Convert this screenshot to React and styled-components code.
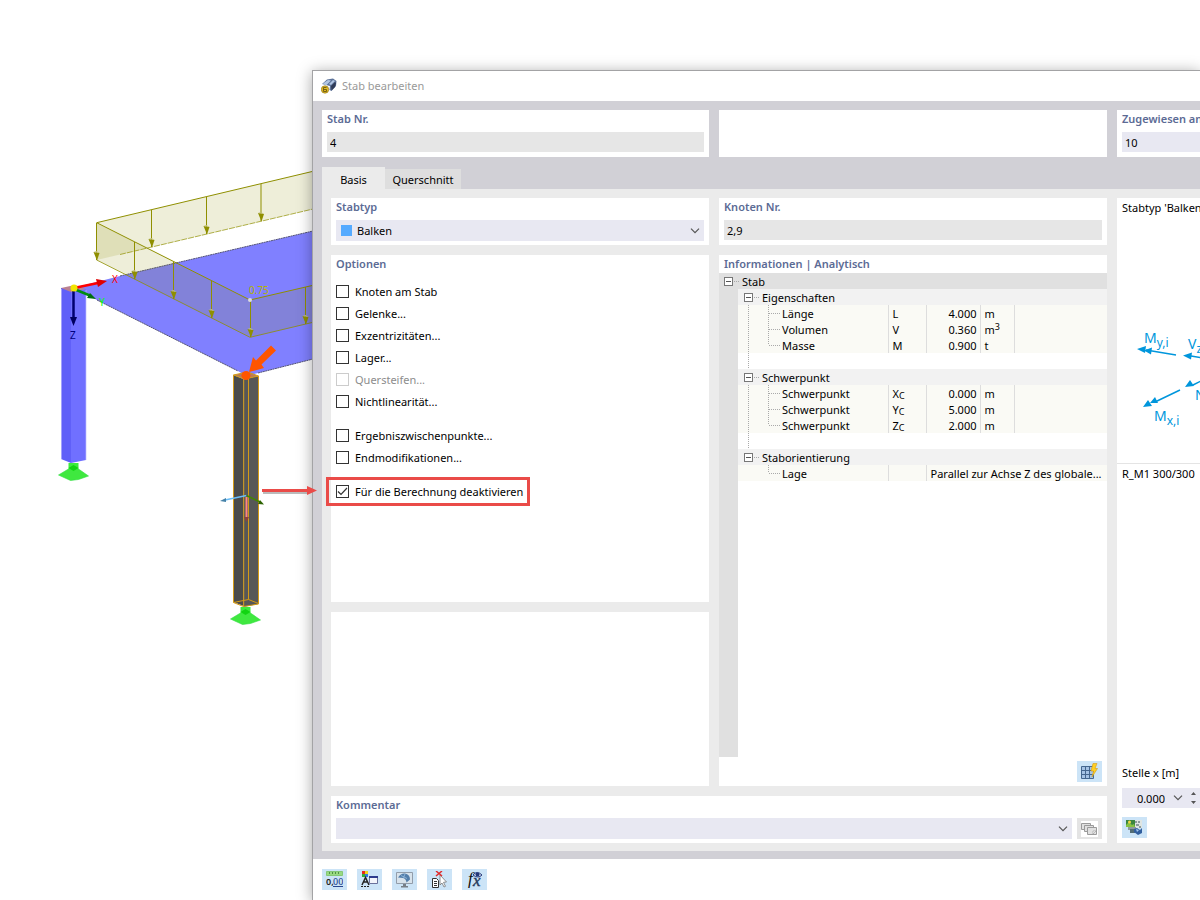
import styled, { createGlobalStyle } from "styled-components";

const GlobalStyle = createGlobalStyle`
  * {
    box-sizing: border-box;
  }

  body {
    margin: 0;
    background: #fff;
    color: #000;
    font-family: "Noto Sans", "Open Sans", sans-serif;
    font-size: 11px;
    line-height: 16px;
  }

  input,
  select,
  button {
    font: inherit;
    color: inherit;
  }
`;

const Page = styled.main`
  position: relative;
  display: grid;
  grid-template-columns: 312px minmax(0, 1fr);
  height: 100vh;
  min-height: 700px;
  overflow: hidden;
`;

const Scene = styled.svg`
  display: block;
  width: 312px;
  height: 900px;
`;

/* lies over both the model and the dialog */
const Callout = styled.svg`
  position: absolute;
  left: 258px;
  top: 480px;
  pointer-events: none;
`;

const Dialog = styled.section`
  display: flex;
  flex-direction: column;
  margin-top: 70px;
  border: solid #a3a3a5;
  border-width: 1px 0 0 1px;
  background: #fff;
  box-shadow: 0 2px 14px rgba(0, 0, 0, 0.35);
`;

const TitleBar = styled.header`
  display: flex;
  align-items: center;
  gap: 5px;
  height: 30px;
  padding-left: 8px;
`;

const Title = styled.h1`
  margin: 0;
  font-size: 11px;
  font-weight: 400;
  color: #999;
`;

const Body = styled.div`
  display: flex;
  flex-direction: column;
  flex: 1;
  min-height: 0;
  padding: 9px 0 8px 9px;
  background: #d1d0d6;
`;

const HeadRow = styled.div`
  display: grid;
  grid-template-columns: 387px minmax(0, 1fr) 83px;
  gap: 10px;
  height: 47px;
`;

const Tabs = styled.div`
  display: flex;
  align-items: flex-end;
  height: 22px;
  margin-top: 10px;
`;

const Tab = styled.button`
  width: ${(p) => (p.$active ? 63 : 76)}px;
  height: ${(p) => (p.$active ? 22 : 20)}px;
  padding: ${(p) => (p.$active ? "4px 0 0" : "2px 0 0")};
  border: 0;
  background: ${(p) => (p.$active ? "#ebebeb" : "#dedede")};
`;

const Content = styled.div`
  display: grid;
  grid-template-columns: 378px minmax(0, 1fr) 83px;
  grid-template-rows: 47px minmax(0, 1fr) 47px;
  gap: 10px;
  flex: 1;
  min-height: 0;
  padding: 9px 0 8px 9px;
  background: #ebebeb;
`;

const Card = styled.section`
  display: flex;
  flex-direction: column;
  min-width: 0;
  padding: 0 5px;
  flex: ${(p) => p.$grow || "none"};
  background: #fff;
`;

const EdgeCard = styled(Card)`
  padding-right: 0;
`;

const WideCard = styled(Card)`
  grid-column: 1 / 3;
`;

const TreeCard = styled(Card)`
  padding: 0;
`;

const SideCard = styled(Card)`
  grid-column: 3;
  grid-row: 1 / 4;
  padding: 0;
  overflow: hidden;
  white-space: nowrap;
`;

const Stack = styled.div`
  display: flex;
  flex-direction: column;
  gap: 10px;
  min-height: 0;
`;

const Label = styled.label`
  height: 22px;
  line-height: 18px;
  font-weight: 600;
  color: #5c6b95;
  white-space: nowrap;
`;

const Heading = styled.h2`
  height: ${(p) => (p.$tight ? 18 : 22)}px;
  margin: 0;
  padding-left: ${(p) => (p.$tight ? 5 : 0)}px;
  font-size: 11px;
  line-height: 18px;
  font-weight: 600;
  color: #5c6b95;
`;

const Field = styled.input`
  width: 100%;
  height: 20px;
  padding: 0 3px;
  border: 0;
  border-radius: 0;
  outline: 0;
  background: ${(p) => (p.readOnly ? "#e6e6e6" : "#e8e8f2")};
`;

const SelectBox = styled.div`
  display: flex;
  align-items: center;
  flex: 1;
  height: 21px;
  max-height: 21px;
  padding: 0 4px 0 5px;
  background: #e8e8f2;
`;

const Swatch = styled.span`
  width: 11px;
  height: 11px;
  margin-right: 5px;
  background: #55aaff;
`;

const Select = styled.select`
  flex: 1;
  min-width: 0;
  padding: 0;
  border: 0;
  outline: 0;
  appearance: none;
  background: transparent;
`;

const Line = styled.div`
  display: flex;
  gap: 5px;
`;

const OptionList = styled.div`
  display: flex;
  flex-direction: column;
  align-items: flex-start;
  gap: 1px;
  padding-top: 4px;
`;

const OptionRow = styled.label`
  position: relative;
  display: flex;
  align-items: center;
  gap: 6px;
  height: 21px;
  margin-top: ${(p) => (p.$apart ? 12 : 0)}px;
  color: ${(p) => (p.$off ? "#8c8c8c" : "#000")};

  &::after {
    content: "";
    display: ${(p) => (p.$marked ? "block" : "none")};
    position: absolute;
    inset: -4px -7px -4px -10px;
    border: 3px solid #ea4b48;
  }
`;

const Check = styled.input`
  appearance: none;
  width: 13px;
  height: 13px;
  margin: 0;
  border: 1px solid #333;
  background: #fff;

  &:disabled {
    border-color: #ccc;
  }

  &:checked {
    background: url("data:image/svg+xml,%3Csvg xmlns='http://www.w3.org/2000/svg' viewBox='0 0 11 11'%3E%3Cpath d='M1 5.5l3 3 6-6.500' fill='none' stroke='%23333' stroke-width='1.200'/%3E%3C/svg%3E");
  }
`;

const TreeArea = styled.div`
  flex: 1;
  min-height: 0;
  overflow: hidden;
  background: linear-gradient(to right, #e0e0e0 19px, #fff 19px);
`;

const Tree = styled.table`
  width: 100%;
  table-layout: fixed;
  border-collapse: collapse;

  td {
    height: 16px;
    padding: 0;
    line-height: 16px;
    white-space: nowrap;
    overflow: hidden;
    text-overflow: ellipsis;
  }

  sub,
  sup {
    font-size: 9px;
    line-height: 0;
  }

  sub {
    vertical-align: -1px;
  }

  sup {
    vertical-align: 4px;
  }
`;

const Gutter = styled.td`
  background: #e0e0e0;
`;

const RootCell = styled.td`
  background: #e0e0e0;
`;

const GroupCell = styled.td`
  background: #f2f2f2;
`;

const NameCell = styled.td`
  background: #fafaf5;
`;

const DataCell = styled.td`
  && {
    padding: 2px ${(p) => (p.$right ? 3 : 4)}px 0;
    line-height: 14px;
  }
  border-left: 1px solid #ddd;
  background: #fafaf5;
  text-align: ${(p) => (p.$right ? "right" : "left")};
`;

const Branch = styled.div`
  display: flex;
  height: 16px;
  padding-left: ${(p) => p.$indent || 0}px;
`;

const NodeName = styled.span`
  padding-top: 1px;
  line-height: 16px;
`;

const Guide = styled.svg`
  flex: none;
  display: block;
`;

const Expander = styled.button`
  flex: none;
  display: block;
  width: 9px;
  height: 9px;
  margin-top: 4px;
  padding: 0;
  border: 1px solid #777;
  background: linear-gradient(#555, #555) center / 5px 1px no-repeat #fff;
`;

const Dots = styled.span`
  flex: none;
  width: 5px;
  height: 1px;
  margin: 8px 3px 0 1px;
  background: repeating-linear-gradient(to right, #aaa 0 1px, transparent 1px 2px);
`;

const CardFoot = styled.div`
  display: flex;
  justify-content: flex-end;
  height: 29px;
  padding: 4px 5px;
`;

const IconButton = styled.button`
  flex: none;
  display: grid;
  place-items: center;
  width: 25px;
  height: 21px;
  padding: 0;
  border: 0;
  background: ${(p) => (p.disabled ? "#e4e4e4" : "#cce4f7")};
`;

const Preview = styled.div`
  height: 266px;
  padding: 2px 0 0 5px;
  border-bottom: 1px solid #e4e4e4;
`;

const Diagram = styled.svg`
  display: block;
`;

const SectionName = styled.div`
  flex: 1;
  padding: 2px 5px 0;
`;

const Position = styled.div`
  display: flex;
  flex-direction: column;
  padding: 0 0 5px 5px;
`;

const PositionLabel = styled.label`
  height: 23px;
`;

const Spin = styled.div`
  display: flex;
  align-items: center;
  gap: 8px;
  height: 20px;
  margin-bottom: 9px;
  background: #e8e8f2;
`;

const SpinInput = styled.input`
  width: 43px;
  padding: 2px 0 0;
  border: 0;
  outline: 0;
  background: transparent;
  text-align: right;
`;

const Footer = styled.footer`
  display: flex;
  gap: 10px;
  height: 41px;
  padding: 10px 9px;
`;

const options = [
  { name: "Knoten am Stab" },
  { name: "Gelenke..." },
  { name: "Exzentrizitäten..." },
  { name: "Lager..." },
  { name: "Quersteifen...", off: true },
  { name: "Nichtlinearität..." },
  { name: "Ergebniszwischenpunkte...", apart: true },
  { name: "Endmodifikationen..." },
  { name: "Für die Berechnung deaktivieren", apart: true, marked: true, checked: true },
];

const groups = [
  {
    name: "Eigenschaften",
    rows: [
      ["Länge", "L", "4.000", "m"],
      ["Volumen", "V", "0.360", <>m<sup>3</sup></>],
      ["Masse", "M", "0.900", "t"],
    ],
  },
  {
    name: "Schwerpunkt",
    rows: [
      ["Schwerpunkt", <>X<sub>C</sub></>, "0.000", "m"],
      ["Schwerpunkt", <>Y<sub>C</sub></>, "5.000", "m"],
      ["Schwerpunkt", <>Z<sub>C</sub></>, "2.000", "m"],
    ],
  },
  {
    name: "Staborientierung",
    rows: [["Lage", "", "Parallel zur Achse Z des globale..."]],
  },
];

function Chevron() {
  return (
    <svg width="10" height="6" viewBox="0 0 10 6" aria-hidden="true">
      <path d="M1 0.700l4 4 4-4" fill="none" stroke="#555" strokeWidth="1.200" />
    </svg>
  );
}

function LeafGuide({ last, trunk }) {
  return (
    <Guide width="44" height="16" aria-hidden="true">
      <g stroke="#aaa" strokeDasharray="1 1">
        {trunk && <path d="M10.500 0v16" />}
        <path d={last ? "M30.500 0v8" : "M30.500 0v16"} />
        <path d="M31 8.500h11" />
      </g>
    </Guide>
  );
}

function LoadArrow({ x, y, to }) {
  return (
    <g>
      <path d={`M${x} ${y}V${to}`} stroke="#8f8f00" />
      <path d={`M${x - 3} ${to - 8}l6 1-2.500 7.500z`} fill="#8f8f00" />
      <path d={`M${x - 3} ${to - 8}l3-1 3 2z`} fill="#c3c178" />
    </g>
  );
}

function Support({ x, y }) {
  return (
    <g transform={`translate(${x} ${y})`}>
      <path d="M-15 12L-5 6H5L15 13 5 16.500-3 17.500z" fill="#3fe83f" stroke="#2fdf3f" strokeWidth=".6" />
      <path d="M-5 0H5V6L0 8-5 6z" fill="#3ceb3c" />
      <path d="M-5 5L0 2 5 5 0 8z" fill="#12d412" />
    </g>
  );
}

function Model() {
  return (
    <Scene viewBox="0 0 312 900" role="img" aria-label="Modell">
      <path d="M73 288L120 276 313 231V359L258 373 246 376 238 371 97 300z" fill="#8080ff" />
      <path d="M120 276L313 231M97 300L238 371M258 373L313 359" fill="none" stroke="#555577" strokeDasharray="2 .5" />

      <path d="M61 288h10v175l-10-4z" fill="#6060f8" />
      <path d="M71 292l15-3v171l-15 3z" fill="#7070ff" />
      <path d="M61 288l14-3 11 4-15 3z" fill="#ba8190" />
      <path d="M61.500 289v170M86 290v170" stroke="#bfbfff" strokeWidth=".7" />
      <Support x={73.500} y={463} />

      <g fill="#8c8c00" fillOpacity=".15">
        <path d="M96.700 222.700L313 171.300V209L96.700 260z" />
        <path d="M96.700 222.700L250 300v37.300L96.700 260z" />
        <path d="M250 300l63-14.700v37L250 337.300z" />
      </g>
      <g fill="none" stroke="#8f8f00">
        <path d="M313 171.300L96.700 222.700 250 300l63-14.700" />
        <path d="M96.700 260L250 337.300l63-15" strokeWidth=".8" />
        <path d="M120 254.500L313 209" strokeWidth=".7" strokeDasharray="6 1" />
      </g>
      <LoadArrow x={96.500} y={223} to={260} />
      <LoadArrow x={151.500} y={210} to={247} />
      <LoadArrow x={206.500} y={197} to={234} />
      <LoadArrow x={261} y={184} to={221} />
      <LoadArrow x={134.500} y={242} to={279} />
      <LoadArrow x={173.500} y={262} to={299} />
      <LoadArrow x={211.500} y={281} to={318} />
      <LoadArrow x={250.500} y={300} to={337} />
      <LoadArrow x={305.500} y={287} to={324} />
      <circle cx="250" cy="300" r="2" fill="#ddd" />
      <text x="249" y="294" fontSize="10" fill="#b4b400">0.75</text>

      <path d="M74 288L98 283" stroke="#f00" strokeWidth="2.500" />
      <path d="M96 279l11 2-9 6z" fill="#e00000" />
      <path d="M74 289l17 7" stroke="#008c10" strokeWidth="2.500" />
      <path d="M90 293l6 6-9-1z" fill="#006f10" />
      <path d="M73.500 290v28" stroke="#000070" strokeWidth="2.500" />
      <path d="M70 317h7l-3.500 9z" fill="#000060" />
      <circle cx="74" cy="288" r="3.500" fill="#f0e400" />
      <g fontSize="10">
        <text x="112" y="283" fill="#f00">X</text>
        <text x="99" y="306" fill="#0f0">Y</text>
        <text x="70" y="339" fill="#000080">Z</text>
      </g>

      <Support x={245.500} y={607} />
      <path d="M233.500 375l10 4v227l-10-4z" fill="#4b4b4b" />
      <path d="M243.500 379l15-3v228l-15 3z" fill="#575757" />
      <path d="M233.500 375l14-3 11 4-14 3z" fill="#b97b58" />
      <path
        d="M233.500 375l14-3 11 4-14 3zV602.500l10 4 15-2.500V376M243.700 379v227M248.500 373v226.500M233.500 602.500l15-3 10 4"
        fill="none"
        stroke="#d39a16"
      />
      <path d="M246.500 495.500L225 500" stroke="#69bdf8" strokeWidth="1.500" />
      <path d="M220 501l6-3 0 4z" fill="#4682a8" />
      <path d="M246.500 495.500L260 502" stroke="#438500" strokeWidth="1.500" />
      <path d="M260 500l4 4.500-6-.5z" fill="#2c6200" />
      <path d="M246.500 497v20" stroke="#ff8585" strokeWidth="2" />
      <path d="M244 517h5l-2.500 5z" fill="#8b4141" />

      <path d="M271 345.500l5 5-14.500 14 2.500 3.500-15 4 4-15 3 3.500z" fill="#ff5500" />
      <circle cx="246" cy="375.500" r="4.500" fill="#ff5500" />
    </Scene>
  );
}

function MemberIcon() {
  return (
    <svg width="16" height="16" viewBox="0 0 16 16" aria-hidden="true">
      <path d="M1 6L6 1.500 12 .5l3.500 2.500-.5 5-4.500 5-2-1 .5-4z" fill="#5d739a" />
      <path d="M2 5.500L7 2l3 .5-5 5zM8 6l4-4 2 1-4 4z" fill="#b0c5e3" />
      <path d="M10 8l4-4 1 1-1 4-3.500 3.500z" fill="#303c58" />
      <circle cx="4" cy="11.500" r="3.700" fill="#e3bb24" stroke="#846a10" strokeWidth=".6" />
      <path d="M5.500 9.500h-3v4h3v-2h-3" fill="none" stroke="#6a5814" strokeWidth=".9" />
    </svg>
  );
}

function GridIcon() {
  return (
    <svg width="17" height="17" viewBox="0 0 17 17" aria-hidden="true">
      <path d="M.5 3.500h12v12H.5z" fill="#a5c3e5" stroke="#45678f" />
      <path d="M4.500 3.500v12M8.500 3.500v12M.5 7.500h12M.5 11.500h12" stroke="#45678f" />
      <path d="M12 .5h4l-2 5h2.500L11 14l1.500-6H10z" fill="#ffcf24" stroke="#d59c17" strokeWidth=".6" />
    </svg>
  );
}

function CopyIcon() {
  return (
    <svg width="17" height="16" viewBox="0 0 17 16" aria-hidden="true">
      <path d="M0 0h17v16H0z" fill="#fff" />
      <g fill="#e0e0e0" stroke="#9a9a9a">
        <path d="M.5 2.500h9v6h-9z" />
        <path d="M3.500 4.500h9v6h-9z" />
        <path d="M6.500 6.500h9v7h-9z" />
      </g>
      <path d="M12 13v-3h3z" fill="#fff" stroke="#999" strokeWidth=".6" />
    </svg>
  );
}

function RenderIcon() {
  return (
    <svg width="17" height="17" viewBox="0 0 17 17" aria-hidden="true">
      <path d="M9 1h7v8H9z" fill="#dfe5e2" />
      <path d="M0 1h9v7H0z" fill="#3b8640" />
      <path d="M0 6l3-3 3 3 2-1 1 3H0z" fill="#86c343" />
      <circle cx="3.500" cy="3" r="1.500" fill="#f4d448" />
      <path d="M9 2h2v2H9zM12 2h2v2h-2zM10 5h3v2h-3zM2 8h8v3H2zM13 7h2v2h-2z" fill="#8b9b9b" />
      <path d="M4 10h5v4H4z" fill="#526d75" />
      <path d="M8 10l3-1 3 2 2-2v5l-4 2-4-3z" fill="#315f9f" />
      <path d="M10 10l3 1-2 2z" fill="#a6c9ee" />
    </svg>
  );
}

function UnitsIcon() {
  return (
    <svg width="17" height="17" viewBox="0 0 17 17" aria-hidden="true">
      <path d="M.5.5h16v4H.5z" fill="#99d982" stroke="#84c877" />
      <path d="M3.500 1v2M6.500 1v2M9.500 1v2M12.500 1v2" stroke="#4f9145" />
      <text x="0" y="14" fontSize="9" fontWeight="600" fill="#222">0,</text>
      <text x="7" y="14" fontSize="9" fontWeight="500" fill="#28468f">00</text>
      <path d="M7 15.500h10" stroke="#28468f" />
    </svg>
  );
}

function DisplayIcon() {
  return (
    <svg width="18" height="17" viewBox="0 0 18 17" aria-hidden="true">
      <path d="M1 0h3v3H1z" fill="#e9281c" />
      <path d="M4 0h3v3H4z" fill="#edd51d" />
      <path d="M1 3h3v3H1z" fill="#32a935" />
      <path d="M4 3h3v3H4z" fill="#3277e0" />
      <path d="M1 14L4.500 6.500 8 14M2.500 11h4" fill="none" stroke="#222" strokeWidth="1.500" />
      <path d="M0 15.500h9" stroke="#222" strokeDasharray="2 1" />
      <path d="M8.500 5.500h8v7h-8z" fill="#f2f4fa" stroke="#6a719b" />
      <path d="M8 5h9v2H8z" fill="#2e3b8c" />
    </svg>
  );
}

function ScreenIcon() {
  return (
    <svg width="17" height="17" viewBox="0 0 17 17" aria-hidden="true">
      <path d="M.5 1.500h16v11H.5z" fill="#d8e3ec" stroke="#929daa" />
      <path d="M2 6.500Q5 2 9 2.500q5 1 5 6l-3.500 3q-.5-4-3.500-4.500z" fill="#537eaa" />
      <path d="M5 4.500l6 3M9 3L7.500 6.500" stroke="#a3c8ea" strokeWidth=".7" />
      <path d="M7 13h3v2h2v1.500H5V15h2z" fill="#777f87" />
    </svg>
  );
}

function PickIcon() {
  return (
    <svg width="17" height="17" viewBox="0 0 17 17" aria-hidden="true">
      <path d="M1.500 7.500h4l2 2v7h-6z" fill="#fff" stroke="#333" />
      <path d="M3 10.500h3M3 12.500h3M3 14.500h3" stroke="#333" />
      <path d="M9 4l6.500 7-3 .3 2 4-1.500.7-2-4L9 14z" fill="#fff" stroke="#777" strokeWidth=".8" />
      <path d="M5 0l6 5M11 0L5 5" stroke="#e02c2c" strokeWidth="1.500" />
    </svg>
  );
}

const FormulaText = styled.text`
  font: italic 17px "Liberation Serif", serif;
`;

function FormulaIcon() {
  return (
    <svg width="19" height="17" viewBox="0 0 19 17" aria-hidden="true">
      <FormulaText x="3" y="13" fill="#111">f</FormulaText>
      <FormulaText x="8" y="15" fill="#273a5c" stroke="#273a5c" strokeWidth=".4">x</FormulaText>
      <path d="M8 4q4-5 9 0-4 4-9 0z" fill="#d4ddf2" stroke="#253878" />
      <circle cx="12.500" cy="3.500" r="2" fill="#253878" />
    </svg>
  );
}

function Forces() {
  return (
    <Diagram width="78" height="246" viewBox="1122 216 78 246" aria-label="Schnittgrößen">
      <g fill="none" stroke="#0096dc" strokeWidth="1.500">
        <path d="M1146 350l30 5M1191 356l12 2M1155 402l25-12M1193 385l10-5" />
      </g>
      <g fill="#0096dc">
        <path d="M1137 349l9-3-1 7zM1144 350.500l8-3-1 7zM1183 355.500l9-3-1 7z" />
        <path d="M1143 407l5-7 4 6zM1150 403l5-6 3 6zM1185 387l5-7 4 6z" />
      </g>
      <g fill="#0096dc" fontSize="14">
        <text x="1144" y="343">M<tspan dy="4" fontSize="12">y,i</tspan></text>
        <text x="1188" y="349">V<tspan dy="4" fontSize="12">z</tspan></text>
        <text x="1154" y="421">M<tspan dy="4" fontSize="12">x,i</tspan></text>
        <text x="1195" y="400">N</text>
      </g>
    </Diagram>
  );
}

function InfoTree() {
  return (
    <Tree>
      <colgroup>
        <col style={{ width: 19 }} />
        <col style={{ width: 150 }} />
        <col style={{ width: 38 }} />
        <col style={{ width: 54 }} />
        <col style={{ width: 34 }} />
        <col />
      </colgroup>
      <tbody>
        <tr>
          <RootCell colSpan={6}>
            <Branch $indent={5}>
              <Expander aria-label="Stab" />
              <Dots />
              <NodeName>Stab</NodeName>
            </Branch>
          </RootCell>
        </tr>
        {groups.map((group, g) => {
          const trunk = g < groups.length - 1;
          return [
            <tr key={group.name}>
              <Gutter />
              <GroupCell colSpan={5}>
                <Branch $indent={6}>
                  <Expander aria-label={group.name} />
                  <Dots />
                  <NodeName>{group.name}</NodeName>
                </Branch>
              </GroupCell>
            </tr>,
            ...group.rows.map(([name, symbol, value, unit], i) => (
              <tr key={group.name + i}>
                <Gutter />
                <NameCell>
                  <Branch>
                    <LeafGuide trunk={trunk} last={i === group.rows.length - 1} />
                    <NodeName>{name}</NodeName>
                  </Branch>
                </NameCell>
                <DataCell>{symbol}</DataCell>
                {unit ? (
                  <>
                    <DataCell $right>{value}</DataCell>
                    <DataCell>{unit}</DataCell>
                    <DataCell />
                  </>
                ) : (
                  <DataCell colSpan={3}>{value}</DataCell>
                )}
              </tr>
            )),
            trunk && (
              <tr key={group.name + "-end"}>
                <Gutter />
                <td colSpan={5}>
                  <Guide width="20" height="16" aria-hidden="true">
                    <path d="M10.500 0v16" stroke="#aaa" strokeDasharray="1 1" />
                  </Guide>
                </td>
              </tr>
            ),
          ];
        })}
      </tbody>
    </Tree>
  );
}

function App() {
  return (
    <Page>
      <GlobalStyle />
      <Model />
      <Dialog aria-label="Stab bearbeiten">
        <TitleBar>
          <MemberIcon />
          <Title>Stab bearbeiten</Title>
        </TitleBar>

        <Body>
          <HeadRow>
            <Card>
              <Label htmlFor="member">Stab Nr.</Label>
              <Field id="member" readOnly value="4" />
            </Card>
            <Card />
            <EdgeCard>
              <Label htmlFor="assigned">Zugewiesen an</Label>
              <Field id="assigned" defaultValue="10" />
            </EdgeCard>
          </HeadRow>

          <Tabs role="tablist">
            <Tab $active role="tab" aria-selected="true">Basis</Tab>
            <Tab role="tab" aria-selected="false">Querschnitt</Tab>
          </Tabs>

          <Content>
            <Card>
              <Label htmlFor="type">Stabtyp</Label>
              <SelectBox>
                <Swatch />
                <Select id="type">
                  <option>Balken</option>
                </Select>
                <Chevron />
              </SelectBox>
            </Card>

            <Card>
              <Label htmlFor="nodes">Knoten Nr.</Label>
              <Field id="nodes" readOnly value="2,9" />
            </Card>

            <SideCard>
              <Preview>
                Stabtyp 'Balken'
                <Forces />
              </Preview>
              <SectionName>R_M1 300/300</SectionName>
              <Position>
                <PositionLabel htmlFor="position">Stelle x [m]</PositionLabel>
                <Spin>
                  <SpinInput id="position" defaultValue="0.000" />
                  <Chevron />
                  <svg width="5" height="12" viewBox="0 0 5 12" aria-hidden="true">
                    <path d="M0 3L2.500 0 5 3zM0 9l2.500 3L5 9z" fill="#555" />
                  </svg>
                </Spin>
                <IconButton aria-label="Rendering">
                  <RenderIcon />
                </IconButton>
              </Position>
            </SideCard>

            <Stack>
              <Card $grow="2 1 0">
                <Heading>Optionen</Heading>
                <OptionList>
                  {options.map((o) => (
                    <OptionRow key={o.name} $apart={o.apart} $off={o.off} $marked={o.marked}>
                      <Check type="checkbox" defaultChecked={o.checked} disabled={o.off} />
                      {o.name}
                    </OptionRow>
                  ))}
                </OptionList>
              </Card>
              <Card $grow="1 1 0" />
            </Stack>

            <TreeCard>
              <Heading $tight>Informationen | Analytisch</Heading>
              <TreeArea>
                <InfoTree />
              </TreeArea>
              <CardFoot>
                <IconButton aria-label="Tabelle">
                  <GridIcon />
                </IconButton>
              </CardFoot>
            </TreeCard>

            <WideCard>
              <Label htmlFor="comment">Kommentar</Label>
              <Line>
                <SelectBox>
                  <Select id="comment">
                    <option></option>
                  </Select>
                  <Chevron />
                </SelectBox>
                <IconButton disabled aria-label="Kommentare">
                  <CopyIcon />
                </IconButton>
              </Line>
            </WideCard>
          </Content>
        </Body>

        <Footer>
          <IconButton aria-label="Einheiten"><UnitsIcon /></IconButton>
          <IconButton aria-label="Darstellung"><DisplayIcon /></IconButton>
          <IconButton aria-label="Ansicht"><ScreenIcon /></IconButton>
          <IconButton aria-label="Auswahl"><PickIcon /></IconButton>
          <IconButton aria-label="Formel"><FormulaIcon /></IconButton>
        </Footer>
      </Dialog>

      <Callout width="64" height="24" viewBox="0 0 64 24" aria-hidden="true">
        <path d="M5 12.500h46" stroke="#777" strokeOpacity=".5" strokeWidth="3" />
        <path d="M4 10.500h46" stroke="#ea4b48" strokeWidth="3" />
        <path d="M49 6l10 4.500-10 4.500z" fill="#ea4b48" />
      </Callout>
    </Page>
  );
}

export default App;
